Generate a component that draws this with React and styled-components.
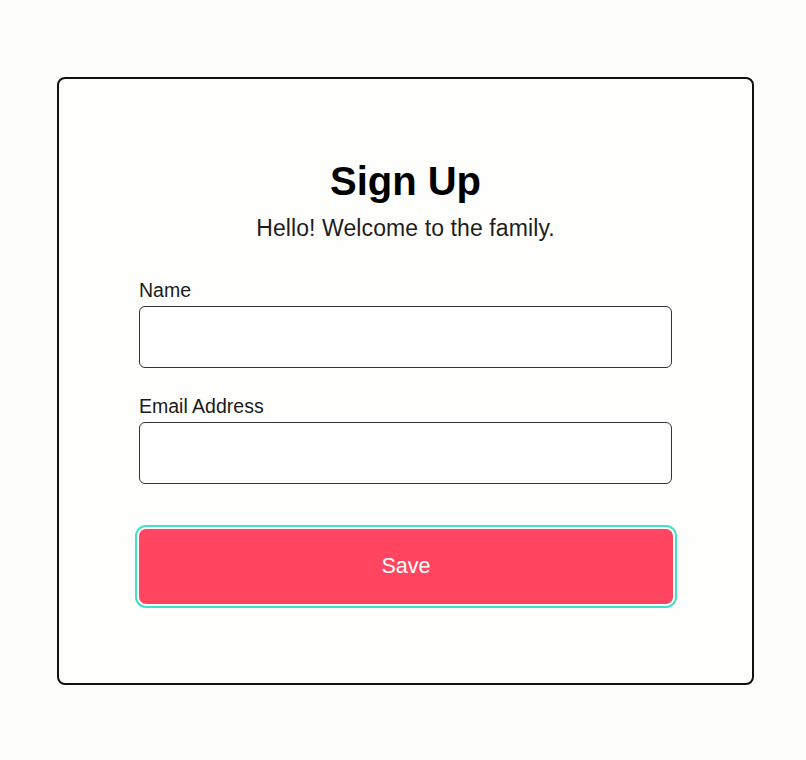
import React from "react";
import styled, { createGlobalStyle } from "styled-components";

const GlobalStyle = createGlobalStyle`
	html, body {
		margin: 0;
		padding: 0;
		background-color: #fdfdfb;
		font-family: "Liberation Sans", Arial, sans-serif;
	}
	* {
		box-sizing: border-box;
	}
`;

const Page = styled.div`
	padding: 77px 0 0 57px;
`;

const Card = styled.form`
	width: 697px;
	border: 2px solid #111;
	border-radius: 8px;
	padding: 80px 80px 79px;
	display: flex;
	flex-direction: column;
	background-color: #fefefd;
`;

const Title = styled.h1`
	margin: 0;
	font-size: 40px;
	line-height: 44px;
	font-weight: 700;
	color: #000;
	text-align: center;
`;

const Subtitle = styled.p`
	margin: 11px 0 0;
	font-size: 23px;
	line-height: 28px;
	letter-spacing: 0.1px;
	color: #1e1e1e;
	text-align: center;
`;

const Field = styled.div`
	display: flex;
	flex-direction: column;
	gap: 5px;
	margin-top: ${({ first }) => (first ? "37px" : "27px")};
`;

const Label = styled.label`
	font-size: 19.5px;
	line-height: 22px;
	color: #1a1a1a;
`;

const Input = styled.input`
	height: 62px;
	width: 100%;
	border: 1px solid #333;
	border-radius: 6px;
	padding: 0 14px;
	font-family: inherit;
	font-size: 18px;
	background: #fff;
	outline: none;
`;

const SaveButton = styled.button`
	margin-top: 45px;
	height: 75px;
	width: 534px;
	border: none;
	border-radius: 7px;
	background-color: #ff4560;
	color: #fff;
	font-family: inherit;
	font-size: 21.5px;
	cursor: pointer;
	outline: 2px solid #45dfc6;
	outline-offset: 2px;
`;

const App = () => {
	return <>
		<GlobalStyle/>
		<Page>
			<Card onSubmit={(e) => e.preventDefault()}>
				<Title>Sign Up</Title>
				<Subtitle>Hello! Welcome to the family.</Subtitle>

				<Field first>
					<Label htmlFor="name">Name</Label>
					<Input id="name" type="text"/>
				</Field>

				<Field>
					<Label htmlFor="email">Email Address</Label>
					<Input id="email" type="email"/>
				</Field>

				<SaveButton type="submit">Save</SaveButton>
			</Card>
		</Page>
	</>;
};

export default App;
